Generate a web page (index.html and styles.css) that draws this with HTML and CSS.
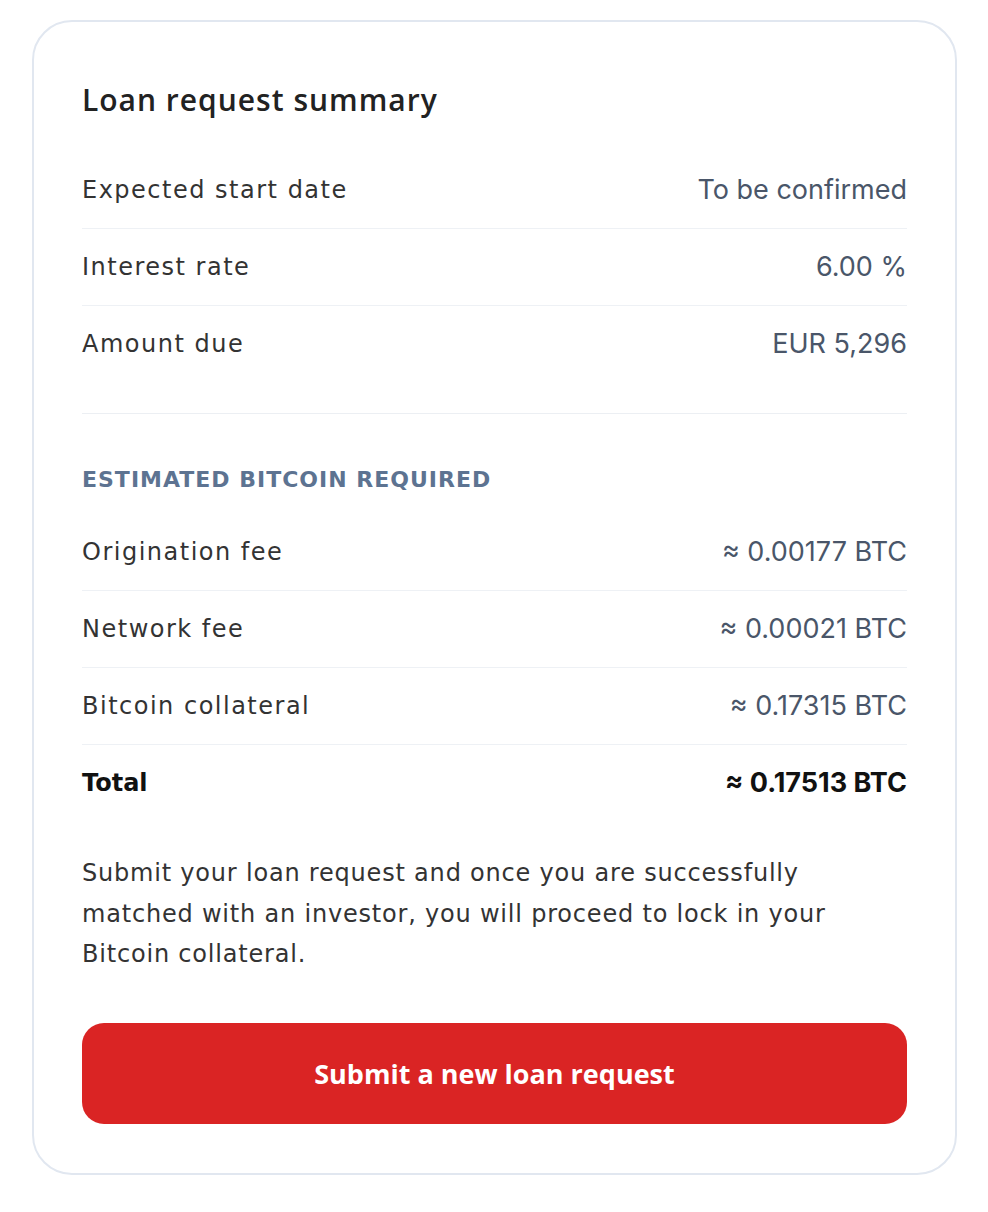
FILE: index.html
```html
<!DOCTYPE html>
<html lang="en">
<head>
<meta charset="utf-8">
<title>Loan request summary</title>
<link rel="stylesheet" href="styles.css">
</head>
<body>
<div class="card">
  <h2 class="title">Loan request summary</h2>
  <div class="rows">
    <div class="row"><span class="label">Expected start date</span><span class="value">To be confirmed</span></div>
    <div class="row"><span class="label">Interest rate</span><span class="value">6.00 %</span></div>
    <div class="row"><span class="label">Amount due</span><span class="value">EUR 5,296</span></div>
  </div>
  <hr class="divider">
  <div class="section-heading">ESTIMATED BITCOIN REQUIRED</div>
  <div class="rows rows-btc">
    <div class="row"><span class="label">Origination fee</span><span class="value">≈ 0.00177 BTC</span></div>
    <div class="row"><span class="label">Network fee</span><span class="value">≈ 0.00021 BTC</span></div>
    <div class="row"><span class="label">Bitcoin collateral</span><span class="value">≈ 0.17315 BTC</span></div>
    <div class="row total"><span class="label">Total</span><span class="value">≈ 0.17513 BTC</span></div>
  </div>
  <p class="note">Submit your loan request and once you are successfully matched with an investor, you will proceed to lock in your Bitcoin collateral.</p>
  <button class="submit" type="button">Submit a new loan request</button>
</div>
</body>
</html>
```
FILE: styles.css
```css
* { box-sizing: border-box; }
html, body { margin: 0; padding: 0; background: #ffffff; }
body {
  font-family: "DejaVu Sans", "Open Sans", sans-serif;
  color: #2b2b2b;
  padding: 20px 31px 37px 32px;
}
.card {
  width: 925px;
  height: 1155px;
  border: 2px solid #e1e7f0;
  border-radius: 40px;
  padding: 58px 48px 49px 48px;
  display: flex;
  flex-direction: column;
}
.title {
  margin: 0;
  font-family: "Open Sans", "DejaVu Sans", sans-serif;
  font-size: 30px;
  line-height: 40px;
  font-weight: 600;
  letter-spacing: 1px;
  color: #222;
}
.rows { margin-top: 32px; display: flex; flex-direction: column; }
.row {
  display: flex;
  justify-content: space-between;
  align-items: center;
  height: 77px;
  border-bottom: 1.5px solid #eef1f5;
  font-size: 24px;
  line-height: 30px;
}
.row:last-child { border-bottom: none; height: 76px; }
.label { color: #333333; font-size: 24px; letter-spacing: 1.5px; }
.value { font-family: "Inter", "Open Sans", sans-serif; color: #4a5669; font-size: 27px; }
.total .label { font-weight: 700; color: #111; letter-spacing: 0; }
.total .value { font-weight: 700; color: #111; }
.divider {
  margin: 31px 0 0 0;
  border: none;
  border-top: 1.5px solid #eceff3;
  height: 0;
}
.section-heading {
  margin-top: 51px;
  font-size: 22px;
  line-height: 30px;
  font-weight: 700;
  letter-spacing: 1px;
  color: #5d7391;
}
.rows-btc { margin-top: 19px; }
.note {
  margin: 32px 0 0 0;
  max-width: 770px;
  font-size: 24px;
  line-height: 40.5px;
  letter-spacing: 0.8px;
  color: #333333;
}
.submit {
  margin-top: 48px;
  height: 102px;
  width: 100%;
  border: none;
  border-radius: 22px;
  background: #da2424;
  color: #ffffff;
  font-family: "Open Sans", "DejaVu Sans", sans-serif;
  font-size: 27px;
  font-weight: 700;
  cursor: pointer;
}
```
